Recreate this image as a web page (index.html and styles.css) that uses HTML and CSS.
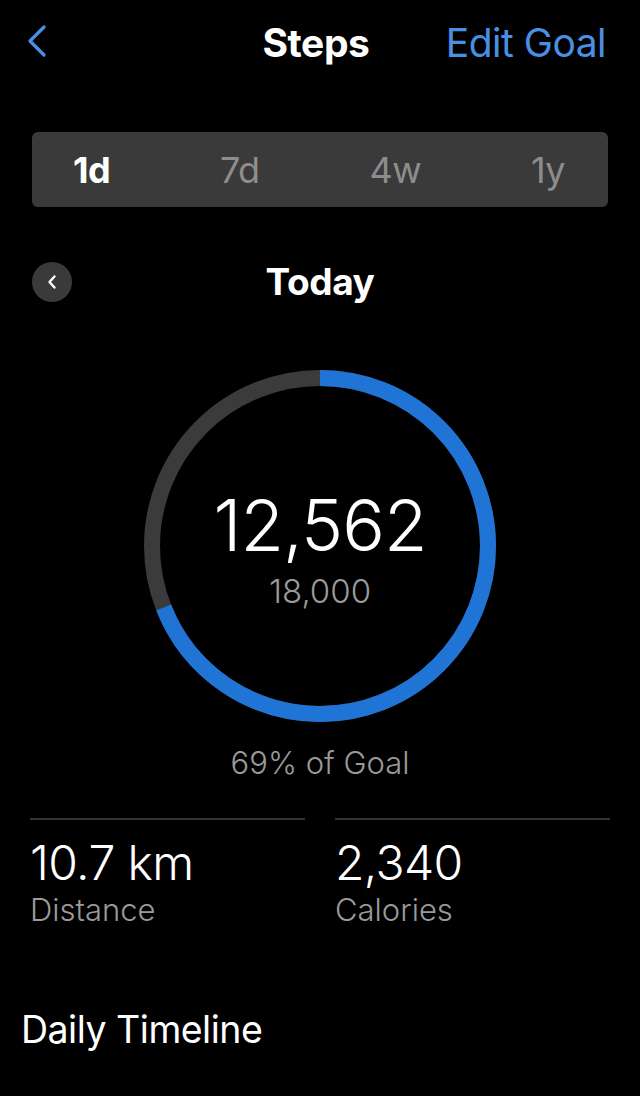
FILE: index.html
```html
<!DOCTYPE html>
<html lang="en">
<head>
  <meta charset="UTF-8" />
  <meta name="viewport" content="width=device-width, initial-scale=1" />
  <title>Steps</title>
  <link rel="stylesheet" href="styles.css">
</head>
<body>
  <header class="nav">
    <button class="nav-back" aria-label="Back">
      <svg width="22" height="32" viewBox="0 0 22 32"><path d="M18 2 L4 16 L18 30" fill="none" stroke="#4a90e2" stroke-width="3.2" stroke-linecap="round" stroke-linejoin="round"/></svg>
    </button>
    <h1 class="nav-title">Steps</h1>
    <a class="nav-action" href="#">Edit Goal</a>
  </header>

  <div class="segments">
    <span class="seg active">1d</span>
    <span class="seg">7d</span>
    <span class="seg">4w</span>
    <span class="seg">1y</span>
  </div>

  <div class="day-row">
    <button class="day-prev" aria-label="Previous day">
      <svg width="12" height="16" viewBox="0 0 12 16"><path d="M8.5 2.5 L3.5 8 L8.5 13.5" fill="none" stroke="#fff" stroke-width="2.4" stroke-linecap="round" stroke-linejoin="round"/></svg>
    </button>
    <h2 class="day-title">Today</h2>
    <span class="day-spacer"></span>
  </div>

  <div class="ring">
    <svg class="ring-svg" width="352" height="352" viewBox="0 0 352 352">
      <circle cx="176" cy="176" r="168" fill="none" stroke="#3b3b3b" stroke-width="16"/>
      <circle cx="176" cy="176" r="168" fill="none" stroke="#1f74d6" stroke-width="16"
        stroke-dasharray="728.4 1055.6" transform="rotate(-90 176 176)"/>
    </svg>
    <div class="ring-text">
      <div class="ring-value">12,562</div>
      <div class="ring-goal">18,000</div>
    </div>
  </div>

  <p class="goal-pct">69% of Goal</p>

  <div class="stats">
    <div class="stat">
      <div class="stat-value">10.7 km</div>
      <div class="stat-label">Distance</div>
    </div>
    <div class="stat">
      <div class="stat-value">2,340</div>
      <div class="stat-label">Calories</div>
    </div>
  </div>

  <h3 class="section-title">Daily Timeline</h3>
</body>
</html>
```

FILE: styles.css
```css
body {
  margin: 0;
  background-color: #000;
  color: #fff;
  font-family: Inter, 'Noto Sans', sans-serif;
  width: 640px;
  height: 1096px;
  overflow: hidden;
}
button {
  border: none;
  background: none;
  padding: 0;
  cursor: pointer;
}
.nav {
  display: grid;
  grid-template-columns: 1fr auto 1fr;
  align-items: center;
  height: 84px;
  padding: 0 34px 0 26px;
}
.nav-back {
  justify-self: start;
  display: flex;
  margin-top: -2px;
}
.nav-title {
  margin: 0;
  font-size: 39px;
  font-weight: 700;
  letter-spacing: -0.4px;
}
.nav-action {
  justify-self: end;
  color: #4a90e2;
  text-decoration: none;
  font-size: 39px;
  font-weight: 400;
  letter-spacing: -0.5px;
}
.segments {
  display: flex;
  justify-content: space-between;
  align-items: center;
  margin: 48px 32px 0;
  padding: 0 43px 0 41px;
  height: 75px;
  background-color: #3a3a3a;
  border-radius: 6px;
}
.seg {
  font-size: 36px;
  color: #8d8d8d;
  letter-spacing: -0.5px;
}
.seg.active {
  color: #fff;
  font-weight: 700;
}
.day-row {
  display: grid;
  grid-template-columns: 1fr auto 1fr;
  align-items: center;
  margin: 52px 32px 0;
  height: 40px;
}
.day-prev {
  width: 40px;
  height: 40px;
  border-radius: 50%;
  background-color: #3a3a3a;
  display: flex;
  align-items: center;
  justify-content: center;
}
.day-title {
  margin: 0;
  font-size: 37px;
  font-weight: 700;
  letter-spacing: -0.4px;
}
.ring {
  position: relative;
  width: 352px;
  height: 352px;
  margin: 71px auto 0;
}
.ring-svg {
  display: block;
}
.ring-text {
  position: absolute;
  inset: 0;
  display: flex;
  flex-direction: column;
  align-items: center;
  justify-content: center;
  padding-top: 6px;
}
.ring-value {
  font-size: 71px;
  font-weight: 300;
  letter-spacing: -1px;
  line-height: 1;
}
.ring-goal {
  font-size: 33px;
  color: #9a9a9a;
  font-weight: 300;
  margin-top: 14px;
  line-height: 1;
}
.goal-pct {
  margin: 22px 0 0;
  text-align: center;
  font-size: 31px;
  color: #9a9a9a;
  font-weight: 300;
}
.stats {
  display: grid;
  grid-template-columns: 1fr 1fr;
  column-gap: 30px;
  margin: 37px 30px 0;
}
.stat {
  border-top: 2px solid #333;
  padding-top: 17px;
}
.stat-value {
  font-size: 48px;
  font-weight: 300;
  line-height: 1.1;
  letter-spacing: -0.6px;
}
.stat-label {
  font-size: 31px;
  color: #9a9a9a;
  font-weight: 300;
  margin-top: 1px;
}
.section-title {
  margin: 79px 0 0 21px;
  font-size: 37.5px;
  font-weight: 400;
  letter-spacing: -0.5px;
}
```
